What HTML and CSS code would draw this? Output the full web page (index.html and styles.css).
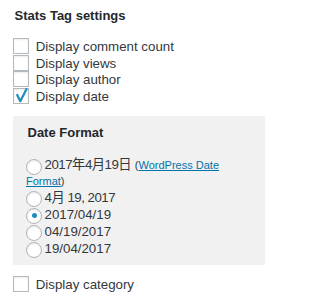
FILE: index.html
```html
<!DOCTYPE html>
<html lang="ja">
<head>
<meta charset="utf-8">
<title>Stats Tag settings</title>
<link rel="stylesheet" href="styles.css">
</head>
<body>
<div class="panel">
  <h3 class="title">Stats Tag settings</h3>
  <div class="checks">
    <label class="check"><span class="box"></span><span class="text">Display comment count</span></label>
    <label class="check"><span class="box"></span><span class="text">Display views</span></label>
    <label class="check"><span class="box"></span><span class="text">Display author</span></label>
    <label class="check"><span class="box"><svg class="tick" width="16" height="16" viewBox="0 0 16 16"><polyline points="4.2,7 7.3,13.2 13.4,1.2" fill="none" stroke="#1e8cbe" stroke-width="2.2" stroke-linecap="round" stroke-linejoin="round"/></svg></span><span class="text">Display date</span></label>
  </div>
  <div class="format">
    <h4 class="format-title">Date Format</h4>
    <div class="radios">
      <label class="radio wrap"><span class="dot"></span><span class="ja">2017年4月19日</span> <small class="note">(<a href="#">WordPress Date Format</a>)</small></label>
      <label class="radio"><span class="dot"></span><span class="text ja">4月 19, 2017</span></label>
      <label class="radio"><span class="dot on"></span><span class="text">2017/04/19</span></label>
      <label class="radio"><span class="dot"></span><span class="text">04/19/2017</span></label>
      <label class="radio"><span class="dot"></span><span class="text">19/04/2017</span></label>
    </div>
  </div>
  <label class="check cat"><span class="box"></span><span class="text">Display category</span></label>
</div>
</body>
</html>
```
FILE: styles.css
```css
html, body {
  margin: 0;
  padding: 0;
  background: #ffffff;
}
body {
  width: 278px;
  font-family: "Liberation Sans", "Noto Sans CJK JP", sans-serif;
  color: #33383d;
  font-size: 13.3px;
}
.panel {
  padding: 0 13px 0 13px;
}
.title {
  margin: 0;
  padding: 6.5px 0 0 1.5px;
  font-size: 13px;
  line-height: 18px;
  font-weight: bold;
  color: #23282d;
}
.checks {
  margin-top: 14.6px;
  display: flex;
  flex-direction: column;
}
.check {
  display: flex;
  align-items: flex-start;
  height: 16.6px;
}
.check .text {
  line-height: 16.6px;
}
.box {
  position: relative;
  box-sizing: border-box;
  flex: 0 0 auto;
  width: 16px;
  height: 16px;
  margin: -1px 7px 0 -0.3px;
  border: 1px solid #b4b9be;
  background: #ffffff;
  box-shadow: inset 0 1px 2px rgba(0, 0, 0, 0.08);
}
.tick {
  position: absolute;
  left: -1px;
  top: -1px;
  overflow: visible;
}
.format {
  margin-top: 10.5px;
  background: #f1f1f1;
  padding: 8px 13px 9px 13px;
}
.format-title {
  margin: 0 0 0 1.5px;
  font-size: 13px;
  line-height: 18px;
  font-weight: bold;
  color: #23282d;
}
.radios {
  margin-top: 15.5px;
  display: flex;
  flex-direction: column;
  gap: 1.8px;
}
.radio {
  display: flex;
  align-items: flex-start;
  height: 15.2px;
}
.radio .text {
  line-height: 15.2px;
}
.radio.wrap {
  display: block;
  height: auto;
  line-height: 15.2px;
}
.ja {
  letter-spacing: -0.5px;
}
.dot {
  position: relative;
  flex: 0 0 auto;
  box-sizing: border-box;
  width: 16px;
  height: 16px;
  margin: 1.2px 2.5px 0 0;
  border: 1px solid #b0b5ba;
  border-radius: 50%;
  background: #ffffff;
  box-shadow: inset 0 1px 2px rgba(0, 0, 0, 0.1);
}
.radio.wrap .dot {
  display: inline-block;
  vertical-align: top;
  margin: 1.2px 2.5px -2px 0;
}
.dot.on::after {
  content: "";
  position: absolute;
  left: 4.5px;
  top: 4.5px;
  width: 5px;
  height: 5px;
  border-radius: 50%;
  background: #1e8cbe;
}
.note {
  font-size: 11px;
  line-height: 1;
}
.note a {
  color: #0073aa;
  text-decoration: underline;
}
.cat {
  margin-top: 12px;
}
```
